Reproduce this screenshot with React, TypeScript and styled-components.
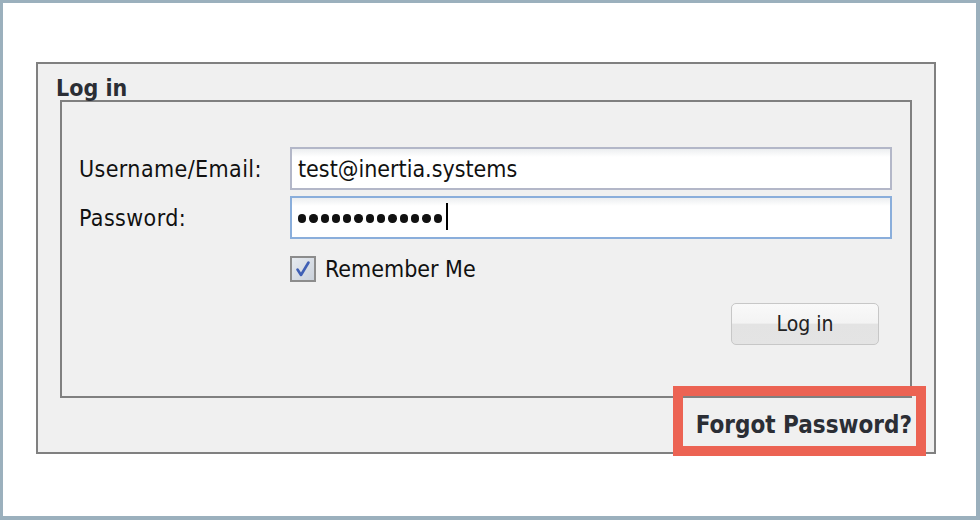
import React from "react";
import styled, { createGlobalStyle } from "styled-components";

const GlobalStyle = createGlobalStyle`
  html, body {
    margin: 0;
    padding: 0;
    background: #ffffff;
  }
  body {
    font-family: "DejaVu Sans Condensed", "DejaVu Sans", sans-serif;
    font-stretch: condensed;
    color: #111111;
  }
`;

const Frame = styled.div`
  box-sizing: border-box;
  width: 980px;
  height: 520px;
  border-style: solid;
  border-color: #9bb0bd;
  border-width: 3px 4px 4px 3px;
  background: #ffffff;
  padding: 59px 0 0 33px;
`;

const Panel = styled.div`
  position: relative;
  box-sizing: border-box;
  width: 900px;
  height: 392px;
  border: 2px solid #808080;
  background: #f0f0f0;
`;

const Title = styled.h2`
  margin: 0;
  padding: 13px 0 0 18px;
  font-size: 23px;
  line-height: 23px;
  font-weight: bold;
  color: #2b2e35;
`;

const Box = styled.div`
  box-sizing: border-box;
  margin: 0 22px;
  height: 298px;
  border: 2px solid #808080;
  padding: 45px 18px 0 16px;
`;

const Row = styled.div<{ $top?: number }>`
  display: flex;
  height: 43px;
  margin-top: ${(p) => p.$top ?? 0}px;
`;

const Label = styled.label`
  flex: 0 0 212px;
  box-sizing: border-box;
  padding: 2px 0 0 1px;
  font-size: 23px;
  line-height: 41px;
  letter-spacing: 0.4px;
`;

const Field = styled.div<{ $focused?: boolean }>`
  flex: 1;
  box-sizing: border-box;
  height: 43px;
  padding: 2px 6px 0;
  display: flex;
  align-items: center;
  border: 2px solid ${(p) => (p.$focused ? "#8aaedb" : "#b3b7c8")};
  background: linear-gradient(#eceef0 0px, #ffffff 8px, #ffffff 100%);
  font-size: 23px;
  line-height: 37px;
  color: #111111;
`;

const Dots = styled.span`
  display: inline-flex;
  align-items: center;
  gap: 3px;
  height: 37px;
`;

const Dot = styled.span`
  width: 8.3px;
  height: 8.3px;
  border-radius: 50%;
  background: #111111;
`;

const Caret = styled.span`
  width: 2px;
  height: 27px;
  margin-left: 1px;
  margin-top: -4px;
  background: #000000;
`;

const CheckRow = styled.div`
  display: flex;
  align-items: center;
  gap: 9px;
  margin: 17px 0 0 212px;
  font-size: 23px;
  line-height: 26px;
`;

const ButtonRow = styled.div`
  display: flex;
  justify-content: flex-end;
  margin-top: 21px;
  padding-right: 13px;
`;

const Button = styled.button`
  box-sizing: border-box;
  width: 148px;
  height: 42px;
  border: 1.5px solid #c7c7c7;
  border-radius: 5px;
  background: linear-gradient(#f9f9f9 0%, #f3f3f3 48%, #e3e3e3 50%, #e4e4e4 100%);
  font-family: inherit;
  font-stretch: condensed;
  font-size: 21px;
  color: #222222;
  padding: 0;
`;

const ForgotRow = styled.div`
  display: flex;
  justify-content: flex-end;
  padding-right: 22px;
  height: 54px;
`;

const Forgot = styled.a`
  position: relative;
  font-size: 24px;
  line-height: 54px;
  font-weight: bold;
  color: #2b2e35;
  text-decoration: none;
`;

const Highlight = styled.span`
  position: absolute;
  top: -12px;
  bottom: -4px;
  left: -23px;
  right: -14px;
  border: 10px solid #ec6353;
  pointer-events: none;
`;

function Checkbox() {
  return (
    <svg width="26" height="26" viewBox="0 0 26 26">
      <defs>
        <linearGradient id="cb" x1="0" y1="0" x2="1" y2="1">
          <stop offset="0" stopColor="#e8ecf1" />
          <stop offset="1" stopColor="#c9d0da" />
        </linearGradient>
      </defs>
      <rect x="1" y="1" width="24" height="24" fill="url(#cb)" stroke="#8c8c8c" strokeWidth="2" />
      <path
        d="M7.5 13.5 L11 19 L18.5 6.5"
        fill="none"
        stroke="#3f5fb5"
        strokeWidth="2.6"
        strokeLinecap="round"
        strokeLinejoin="round"
      />
    </svg>
  );
}

export default function App() {
  return (
    <>
      <GlobalStyle />
      <Frame>
        <Panel>
          <Title>Log in</Title>
          <Box>
            <Row>
              <Label>Username/Email:</Label>
              <Field>test@inertia.systems</Field>
            </Row>
            <Row $top={6}>
              <Label>Password:</Label>
              <Field $focused>
                <Dots>
                  {Array.from({ length: 13 }).map((_, i) => (
                    <Dot key={i} />
                  ))}
                  <Caret />
                </Dots>
              </Field>
            </Row>
            <CheckRow>
              <Checkbox />
              <span>Remember Me</span>
            </CheckRow>
            <ButtonRow>
              <Button>Log in</Button>
            </ButtonRow>
          </Box>
          <ForgotRow>
            <Forgot href="#">
              Forgot Password?
              <Highlight />
            </Forgot>
          </ForgotRow>
        </Panel>
      </Frame>
    </>
  );
}
